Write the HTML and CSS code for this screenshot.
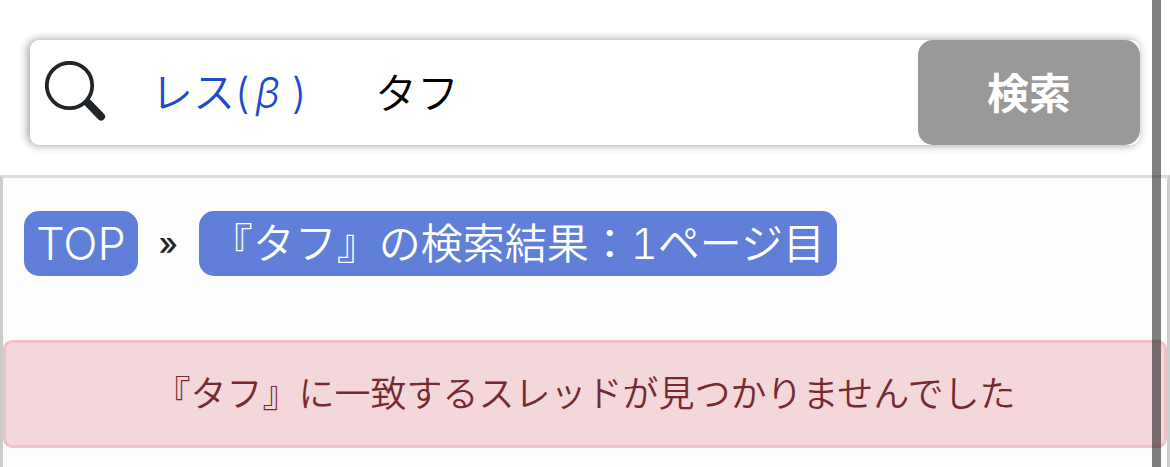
FILE: index.html
```html
<!DOCTYPE html>
<html lang="ja">
<head>
<meta charset="UTF-8">
<meta name="viewport" content="width=device-width, initial-scale=1.0">
<title>『タフ』の検索結果</title>
<link rel="stylesheet" href="styles.css">
</head>
<body>
<form class="search-form">
    <label class="search-icon" for="search-word" aria-label="検索">
        <svg width="62" height="62" viewBox="0 0 62 62">
            <circle cx="24.5" cy="24.5" r="22.7" fill="none" stroke="#212529" stroke-width="3.8"/>
            <path d="M43 42L56 55.5" stroke="#212529" stroke-width="8" stroke-linecap="round"/>
            <path d="M40 39L46 45" stroke="#212529" stroke-width="6"/>
        </svg>
    </label>
    <a class="search-type" href="#">レス(<i>β</i>)</a>
    <input type="text" id="search-word" class="search-word" value="タフ">
    <button type="submit" class="search-btn">検索</button>
</form>

<main class="main-box">
    <nav class="breadcrumb">
        <a class="crumb crumb-top" href="#">TOP</a>
        <span class="separator">»</span>
        <a class="crumb" href="#">『タフ』の検索結果：1ページ目</a>
    </nav>
    <div class="alert" role="alert">『タフ』に一致するスレッドが見つかりませんでした</div>
</main>

<div class="scroll-thumb"></div>
</body>
</html>
```

FILE: styles.css
```css
* {
    box-sizing: border-box;
}

body {
    display: flex;
    flex-direction: column;
    min-height: 100vh;
    margin: 0;
    background-color: #fff;
    color: #212529;
    font-family: Inter, "Noto Sans CJK JP", sans-serif;
    font-size: 42px;
    font-weight: 350;
}

a {
    text-decoration: none;
}

.search-form {
    display: flex;
    align-items: center;
    height: 105px;
    margin: 40px 30px 30px;
    border-radius: 9px;
    background-color: #fff;
    box-shadow: -2px 0 10px rgba(0, 0, 0, 0.4);
}

.search-icon {
    display: flex;
    padding: 0 0 2px 15px;
}

.search-type {
    width: 222px;
    padding-left: 44px;
    color: #1d4bcb;
    line-height: 65px;
    white-space: nowrap;
}

.search-type i {
    display: inline-block;
    width: 42px;
    padding-right: 6px;
    font-family: Inter, sans-serif;
    font-size: 42px;
    line-height: 1;
    text-align: center;
}

.search-word {
    flex: 1;
    min-width: 0;
    height: 100%;
    padding: 0 0 4px 46px;
    border: none;
    background: transparent;
    color: #000;
    font: inherit;
    outline: none;
}

.search-btn {
    width: 222px;
    height: 100%;
    padding: 0 0 4px;
    border: none;
    border-radius: 15px;
    background-color: #999;
    color: #fff;
    font: inherit;
    font-weight: 700;
    cursor: pointer;
}

.main-box {
    flex: 1;
    border: 3px solid #ccc;
    border-top-color: #dcdcdc;
    border-bottom: none;
    background-color: #fdfdfd;
}

.breadcrumb {
    display: flex;
    align-items: center;
    padding: 33px 21px 64px;
}

.crumb {
    height: 65px;
    padding: 0 12px;
    border-radius: 15px;
    background-color: #607fd8;
    color: #fff;
    font-variant-numeric: tabular-nums;
    line-height: 65px;
    white-space: nowrap;
}

.crumb-top {
    font-size: 45px;
}

.separator {
    width: 61px;
    text-align: center;
    font-weight: 500;
    font-size: 32px;
    line-height: 65px;
}

.alert {
    padding: 24px;
    border: 3px solid #eec2c7;
    border-radius: 9px;
    background-color: #f3d7da;
    color: #762a2f;
    font-size: 36px;
    line-height: 54px;
    text-align: center;
}

/* overlay scrollbar */
.scroll-thumb {
    position: fixed;
    top: 0;
    right: 9px;
    bottom: 0;
    width: 9px;
    background-color: rgba(0, 0, 0, 0.5);
}
```
